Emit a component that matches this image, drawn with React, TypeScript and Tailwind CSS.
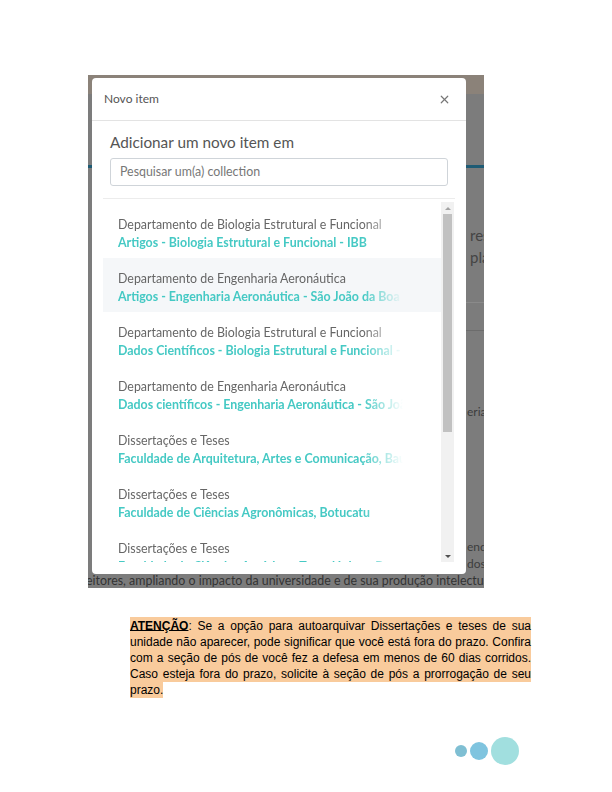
import { X } from 'lucide-react'

const items = [
  { top: 'Departamento de Biologia Estrutural e Funcional', name: 'Artigos - Biologia Estrutural e Funcional - IBB' },
  { top: 'Departamento de Engenharia Aeronáutica', name: 'Artigos - Engenharia Aeronáutica - São João da Boa Vista', active: true },
  { top: 'Departamento de Biologia Estrutural e Funcional', name: 'Dados Científicos - Biologia Estrutural e Funcional - IBB' },
  { top: 'Departamento de Engenharia Aeronáutica', name: 'Dados científicos - Engenharia Aeronáutica - São João da Boa Vista' },
  { top: 'Dissertações e Teses', name: 'Faculdade de Arquitetura, Artes e Comunicação, Bauru' },
  { top: 'Dissertações e Teses', name: 'Faculdade de Ciências Agronômicas, Botucatu' },
  { top: 'Dissertações e Teses', name: 'Faculdade de Ciências Agrárias e Tecnológicas, Dracena' },
]

export default function App() {
  return (
    <div className="w-[612px] h-[792px] bg-white font-['Liberation_Sans',Arial,sans-serif]">
      <div className="pt-[75px] pl-[88px]">
        {/* screenshot of the repository page */}
        <div className="relative w-[396px] h-[513px] overflow-hidden bg-[#7c7c7c] font-['Lato',sans-serif]">
          <div className="h-[19px] bg-[#8b8279]" />
          <div className="absolute left-0 right-0 top-[90px] h-[3px] bg-[#1e5b74]" />
          <div className="absolute left-[378px] right-0 top-[227px] h-px bg-[#8a8a8a]" />
          <div className="absolute left-[378px] right-0 top-[255px] h-px bg-[#6c6c6c]" />
          <span className="absolute left-[382px] top-[149px] text-[15px] text-[#444]">res</span>
          <span className="absolute left-[382px] top-[171px] text-[15px] text-[#444]">pla</span>
          <span className="absolute left-[379px] top-[328px] text-[12px] text-[#3c3c3c]">eria</span>
          <span className="absolute left-[379px] top-[463px] text-[12px] text-[#3c3c3c]">end</span>
          <span className="absolute left-[379px] top-[480px] text-[12px] text-[#3c3c3c]">dos</span>
          <span className="absolute left-[-2px] top-[497px] whitespace-nowrap text-[12.4px] text-[#333]">
            eitores, ampliando o impacto da universidade e de sua produção intelectual
          </span>

          {/* modal */}
          <div className="absolute left-[4px] top-[3px] w-[374px] h-[496px] rounded-[4px] bg-white overflow-hidden">
            <div className="h-[43px] flex items-center justify-between px-3 border-b border-[#e3e3e3]">
              <span className="text-[12px] text-[#555]">Novo item</span>
              <X className="w-[13px] h-[13px] text-[#777] mr-[3px]" strokeWidth={2.2} />
            </div>
            <div className="px-[18px] pt-[11px]">
              <h2 className="text-[15.3px] leading-[20px] text-[#555]">Adicionar um novo item em</h2>
              <div className="mt-[6px] h-[28px] border border-[#cfd4d9] rounded-[3px] flex items-center px-[9px] text-[12.4px] text-[#777]">
                Pesquisar um(a) collection
              </div>
            </div>
            <div className="mx-[11px] mt-[12px] border-t border-[#ececec]" />
            <div className="mx-[11px] mt-[3px] h-[360px] flex">
              <div className="flex-1 pt-[2px] overflow-hidden">
                {items.map((it, i) => (
                  <div key={i} className={`h-[54px] pl-[15px] pt-[12px] ${it.active ? 'bg-[#f5f7f9]' : ''}`}>
                    <div className="w-[285px] overflow-hidden whitespace-nowrap [mask-image:linear-gradient(to_right,#000_245px,transparent_285px)]">
                      <div className="text-[12.4px] leading-[18px] text-[#666]">{it.top}</div>
                      <div className="text-[12.4px] leading-[18px] font-bold text-[#45c9c4]">{it.name}</div>
                    </div>
                  </div>
                ))}
              </div>
              <div className="w-[13px] mr-[1px] bg-[#f1f1f1] flex flex-col items-center">
                <div className="h-[12px] flex items-center justify-center">
                  <div className="w-0 h-0 border-l-[3px] border-r-[3px] border-b-[3px] border-l-transparent border-r-transparent border-b-[#a3a3a3]" />
                </div>
                <div className="w-[9px] h-[218px] bg-[#c1c1c1]" />
                <div className="flex-1" />
                <div className="h-[12px] flex items-center justify-center">
                  <div className="w-0 h-0 border-l-[3px] border-r-[3px] border-t-[3px] border-l-transparent border-r-transparent border-t-[#505050]" />
                </div>
              </div>
            </div>
          </div>
        </div>
      </div>

      <p className="mt-[29px] ml-[130px] w-[401px] text-[12px] leading-[16px] text-justify text-black">
        <span className="bg-[#f9cb9c] py-[1.5px] [box-decoration-break:clone]">
          <b className="underline">ATENÇÃO</b>: Se a opção para autoarquivar Dissertações e teses de sua unidade não aparecer, pode significar que você está fora do prazo. Confira com a seção de pós de você fez a defesa em menos de 60 dias corridos. Caso esteja fora do prazo, solicite à seção de pós a prorrogação de seu prazo.
        </span>
      </p>

      <div className="mt-[40px] ml-[455px] flex items-center gap-[3px]">
        <div className="w-[12px] h-[12px] rounded-full bg-[#7fbfd3]" />
        <div className="w-[18px] h-[18px] rounded-full bg-[#7fc4df]" />
        <div className="w-[28px] h-[28px] rounded-full bg-[#a1dfdf]" />
      </div>
    </div>
  )
}
